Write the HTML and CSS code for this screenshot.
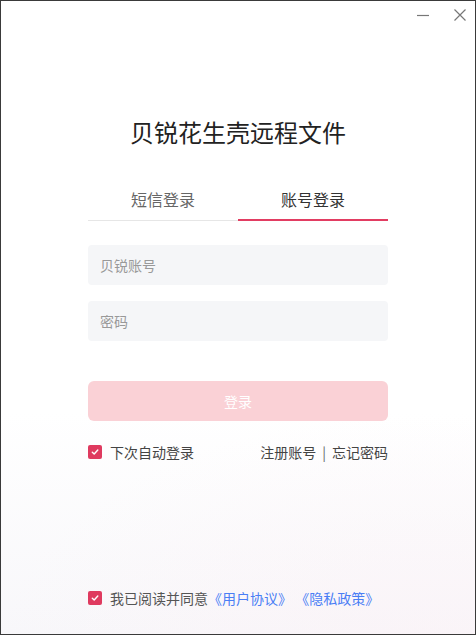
FILE: index.html
```html
<!DOCTYPE html>
<html lang="zh-CN">
<head>
<meta charset="utf-8">
<title>贝锐花生壳远程文件</title>
<link rel="stylesheet" href="styles.css">
</head>
<body>
<div class="window">
  <div class="titlebar">
    <button class="ctl" aria-label="最小化">
      <svg width="14" height="14" viewBox="0 0 14 14"><path d="M1 7.5H13" stroke="#777" stroke-width="1.2"/></svg>
    </button>
    <button class="ctl" aria-label="关闭">
      <svg width="14" height="14" viewBox="0 0 14 14"><path d="M1.5 1.5L12.5 12.5M12.5 1.5L1.5 12.5" stroke="#777" stroke-width="1.2"/></svg>
    </button>
  </div>
  <div class="content">
    <h1 class="title">贝锐花生壳远程文件</h1>
    <div class="tabs">
      <div class="tab">短信登录</div>
      <div class="tab active">账号登录</div>
    </div>
    <div class="field"><input class="input" type="text" placeholder="贝锐账号"></div>
    <div class="field second"><input class="input" type="password" placeholder="密码"></div>
    <button class="login">登录</button>
    <div class="options">
      <label class="check">
        <span class="box"><svg width="8" height="8" viewBox="0 0 8 8"><path d="M1.3 4.2L3.2 6L6.8 2" fill="none" stroke="#fff" stroke-width="1.4" stroke-linecap="round" stroke-linejoin="round"/></svg></span>
        <span>下次自动登录</span>
      </label>
      <div class="links">
        <a class="link">注册账号</a><span class="sep">|</span><a class="link">忘记密码</a>
      </div>
    </div>
  </div>
  <div class="agree">
    <span class="box"><svg width="8" height="8" viewBox="0 0 8 8"><path d="M1.3 4.2L3.2 6L6.8 2" fill="none" stroke="#fff" stroke-width="1.4" stroke-linecap="round" stroke-linejoin="round"/></svg></span>
    <span class="agree-text">我已阅读并同意<a class="doc">《用户协议》</a> <a class="doc">《隐私政策》</a></span>
  </div>
</div>
</body>
</html>
```
FILE: styles.css
```css
* { box-sizing: border-box; }
html, body { margin: 0; padding: 0; }
body {
  font-family: "Noto Sans CJK SC", "Noto Sans", sans-serif;
  color: #333;
}
.window {
  width: 476px;
  height: 635px;
  border: 1px solid #3a3a3a;
  display: flex;
  flex-direction: column;
  background:
    radial-gradient(ellipse 420px 220px at 90% 100%, rgba(252, 240, 245, 0.45), rgba(255,255,255,0) 100%),
    linear-gradient(to bottom, #ffffff 0%, #ffffff 65%, #f8f7fa 100%);
}
.titlebar {
  display: flex;
  justify-content: flex-end;
  gap: 23px;
  padding: 7px 8px 0 0;
  height: 30px;
}
.ctl {
  border: 0;
  background: none;
  padding: 0;
  width: 14px;
  height: 14px;
  display: flex;
}
.content {
  width: 300px;
  margin: 0 auto;
  display: flex;
  flex-direction: column;
  flex: 1;
}
.title {
  margin: 84px 0 0;
  font-size: 24px;
  font-weight: 400;
  line-height: 34px;
  text-align: center;
  color: #222;
  letter-spacing: 0;
}
.tabs {
  display: flex;
  margin-top: 32px;
  border-bottom: 1px solid #e6e6e6;
}
.tab {
  flex: 1;
  text-align: center;
  font-size: 16px;
  line-height: 24px;
  padding: 6px 0 9px;
  color: #666;
}
.tab.active {
  color: #333;
  border-bottom: 2px solid #e23d62;
  margin-bottom: -1px;
  padding-bottom: 8px;
}
.field { margin-top: 24px; }
.field.second { margin-top: 16px; }
.input {
  display: block;
  width: 100%;
  height: 40px;
  border: 0;
  border-radius: 4px;
  background: #f5f6f8;
  padding: 0 12px;
  font-family: inherit;
  font-size: 14px;
  color: #333;
  outline: none;
}
.input::placeholder { color: #999; }
.login {
  margin-top: 40px;
  height: 40px;
  border: 0;
  border-radius: 6px;
  background: #fad1d6;
  color: #fff;
  font-family: inherit;
  font-size: 14px;
}
.options {
  margin-top: 21px;
  display: flex;
  justify-content: space-between;
  align-items: center;
  height: 20px;
  font-size: 14px;
  color: #444;
}
.check { display: flex; align-items: center; gap: 8px; }
.box {
  width: 14px;
  height: 14px;
  border-radius: 2px;
  background: #df3a5f;
  display: inline-flex;
  align-items: center;
  justify-content: center;
  flex: none;
}
.links { display: flex; align-items: center; }
.link { color: #444; }
.sep { margin: 0 6px; color: #666; }
.agree {
  display: flex;
  align-items: center;
  gap: 8px;
  width: 300px;
  margin: 0 auto 26px;
  height: 20px;
  font-size: 14px;
  color: #555;
}
.agree-text { white-space: pre; }
.doc { color: #4a7ef5; }
```
